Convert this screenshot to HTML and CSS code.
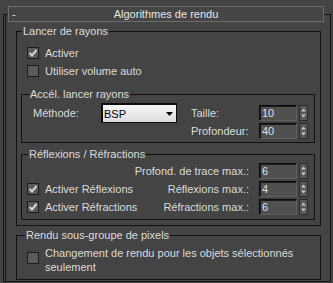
FILE: index.html
```html
<!DOCTYPE html>
<html lang="fr">
<head>
  <meta charset="UTF-8" />
  <title>Algorithmes de rendu</title>
  <link rel="stylesheet" href="styles.css">
</head>
<body>
  <div class="rollout">
    <div class="rollout-title"><span class="toggle">-</span><span class="caption">Algorithmes de rendu</span><span></span></div>

    <fieldset class="group ray">
      <legend>Lancer de rayons</legend>
      <label class="check"><span class="box"><svg width="12" height="12"><polyline points="2.5,6 5,8.5 9.5,3" fill="none" stroke="#d4d4d4" stroke-width="2"/></svg></span>Activer</label>
      <label class="check"><span class="box"></span>Utiliser volume auto</label>

      <fieldset class="group sub accel">
        <legend>Accél. lancer rayons</legend>
        <div class="accel-body">
          <div class="method">
            <span class="method-label">Méthode:</span>
            <div class="dropdown"><span>BSP</span><svg width="7" height="4"><path d="M0 0h7L3.5 4z" fill="#000"/></svg></div>
          </div>
          <div class="params">
            <span>Taille:</span>
            <div class="spin"><span class="value">10</span><svg width="9" height="16"><rect x="0.5" y="0.5" width="8" height="15" fill="#585858" stroke="#2c2c2c"/><path d="M2 6.5h5L4.5 3.5z" fill="#c4c4c4"/><path d="M2 9.5h5L4.5 12.5z" fill="#c4c4c4"/></svg></div>
            <span>Profondeur:</span>
            <div class="spin"><span class="value">40</span><svg width="9" height="16"><rect x="0.5" y="0.5" width="8" height="15" fill="#585858" stroke="#2c2c2c"/><path d="M2 6.5h5L4.5 3.5z" fill="#c4c4c4"/><path d="M2 9.5h5L4.5 12.5z" fill="#c4c4c4"/></svg></div>
          </div>
        </div>
      </fieldset>

      <fieldset class="group sub refl">
        <legend>Réflexions / Réfractions</legend>
        <div class="refl-grid">
          <span></span>
          <span class="rlabel">Profond. de trace max.:</span>
          <div class="spin"><span class="value">6</span><svg width="9" height="16"><rect x="0.5" y="0.5" width="8" height="15" fill="#585858" stroke="#2c2c2c"/><path d="M2 6.5h5L4.5 3.5z" fill="#c4c4c4"/><path d="M2 9.5h5L4.5 12.5z" fill="#c4c4c4"/></svg></div>

          <label class="check"><span class="box"><svg width="12" height="12"><polyline points="2.5,6 5,8.5 9.5,3" fill="none" stroke="#d4d4d4" stroke-width="2"/></svg></span>Activer Réflexions</label>
          <span class="rlabel">Réflexions max.:</span>
          <div class="spin"><span class="value">4</span><svg width="9" height="16"><rect x="0.5" y="0.5" width="8" height="15" fill="#585858" stroke="#2c2c2c"/><path d="M2 6.5h5L4.5 3.5z" fill="#c4c4c4"/><path d="M2 9.5h5L4.5 12.5z" fill="#c4c4c4"/></svg></div>

          <label class="check"><span class="box"><svg width="12" height="12"><polyline points="2.5,6 5,8.5 9.5,3" fill="none" stroke="#d4d4d4" stroke-width="2"/></svg></span>Activer Réfractions</label>
          <span class="rlabel">Réfractions max.:</span>
          <div class="spin"><span class="value">6</span><svg width="9" height="16"><rect x="0.5" y="0.5" width="8" height="15" fill="#585858" stroke="#2c2c2c"/><path d="M2 6.5h5L4.5 3.5z" fill="#c4c4c4"/><path d="M2 9.5h5L4.5 12.5z" fill="#c4c4c4"/></svg></div>
        </div>
      </fieldset>
    </fieldset>

    <fieldset class="group pixels">
      <legend>Rendu sous-groupe de pixels</legend>
      <label class="check multi"><span class="box"></span><span>Changement de rendu pour les objets sélectionnés seulement</span></label>
    </fieldset>
  </div>
</body>
</html>
```

FILE: styles.css
```css
* { margin: 0; padding: 0; box-sizing: border-box; }
body {
  background: #444444;
  color: #dcdcdc;
  font-family: 'Liberation Sans', Arial, sans-serif;
  font-size: 11px;
  line-height: 14px;
}
.rollout {
  width: 328px;
  margin: 14px 0 0 3px;
  padding: 0 9px 1px 12px;
  border: 1px solid #161616;
  box-shadow: inset 1px 0 0 #444444, inset 2px 0 0 #161616;
}
.rollout-title {
  width: 316px;
  height: 16px;
  margin: -9px 0 0 -8px;
  border: 1px solid #6c6c6c;
  background: #454545;
  display: grid;
  grid-template-columns: 1fr auto 1fr;
  line-height: 14px;
  color: #e8e8e8;
}
.toggle { padding-left: 3px; }

.group {
  border: 1px solid #121212;
  min-inline-size: 0;
}
.group legend {
  padding: 0 1px;
  line-height: 13px;
}
.ray { margin-top: 3px; padding: 6px 0 5px 0; }
.ray > legend { margin-left: 5px; }
.sub { margin: 0 5px 0 4px; }
.accel { margin-top: 8px; }
.accel > legend { margin-left: 7px; }
.refl { margin-top: 5px; }
.refl > legend { margin-left: 6px; }
.pixels { margin-top: 3px; padding: 4px 0 5px 0; }
.pixels > legend { margin-left: 8px; }

.check {
  display: flex;
  align-items: center;
  height: 18px;
  padding-left: 10px;
  white-space: nowrap;
}
.box {
  width: 12px;
  height: 12px;
  margin-right: 6px;
  border: 1px solid #1c1c1c;
  background: #5a5a5a;
  flex: none;
  position: relative;
}
.box svg { position: absolute; top: -1px; left: -1px; }
.check.multi { height: auto; align-items: flex-start; white-space: normal; }
.check.multi .box { margin-top: 6px; }

.accel-body {
  display: flex;
  align-items: flex-start;
  padding: 4px 6px 3px 11px;
}
.method {
  display: flex;
  align-items: center;
  margin-top: -2px;
  margin-right: 14px;
}
.method-label { width: 68px; }
.dropdown {
  width: 76px;
  height: 20px;
  display: flex;
  align-items: center;
  justify-content: space-between;
  padding: 0 3px 0 1px;
  border-style: solid;
  border-width: 2px 1px 1px 2px;
  border-color: #0c0c0c;
  background: linear-gradient(#f6f6f6, #dcdcdc);
  color: #000;
}
.params {
  display: grid;
  grid-template-columns: 68px 49px;
  grid-auto-rows: 16px;
  row-gap: 2px;
  line-height: 16px;
}
.spin {
  display: flex;
  gap: 2px;
}
.value {
  width: 38px;
  height: 16px;
  padding-left: 2px;
  border: 1px solid;
  border-color: #0a0a0a #5f5f5f #5f5f5f #0a0a0a;
  box-shadow: inset 1px 1px 0 #1d1d1d;
  background: #505050;
  color: #dae2ee;
  line-height: 14px;
}

.refl-grid {
  display: grid;
  grid-template-columns: minmax(0, 1fr) auto 49px;
  grid-auto-rows: 16px;
  row-gap: 2px;
  align-items: center;
  padding: 2px 6px 4px 0;
}
.refl-grid .check { height: 16px; padding-left: 5px; }
.rlabel { margin-right: 10px; text-align: right; white-space: nowrap; }
```
